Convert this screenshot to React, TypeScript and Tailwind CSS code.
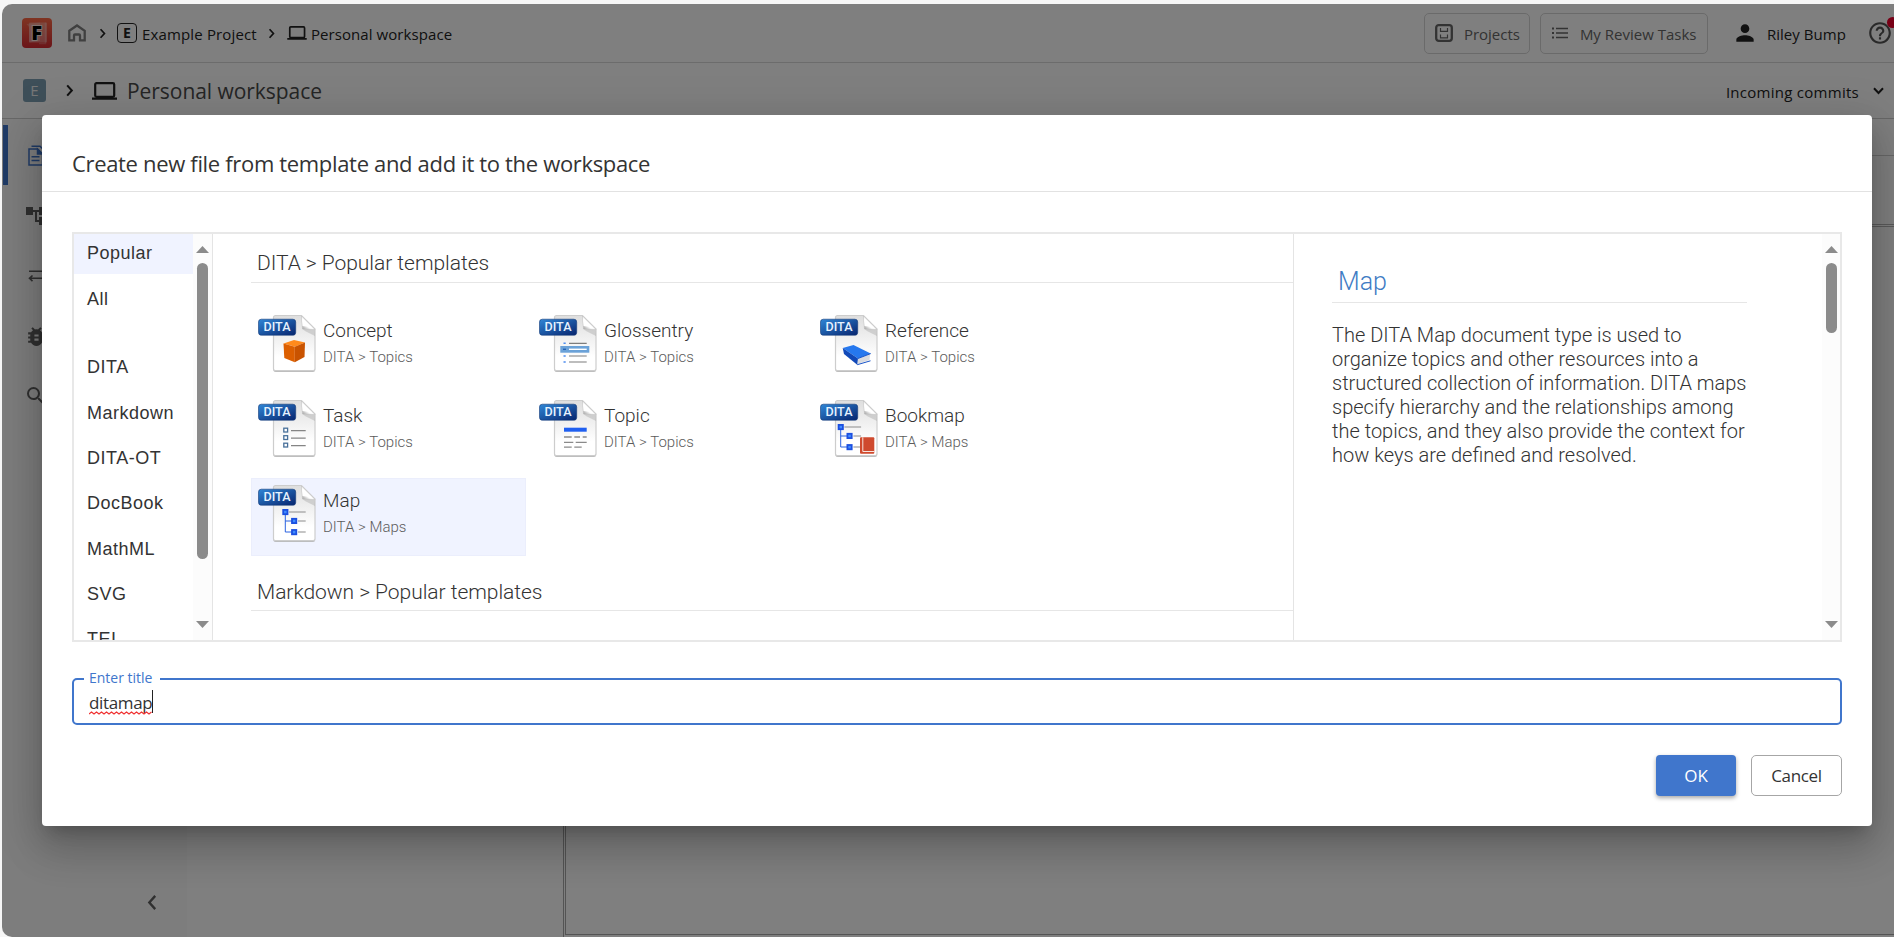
import type { ReactNode } from 'react';
import { MdAccountTree, MdBugReport, MdHelpOutline, MdPerson, MdSearch } from 'react-icons/md';

const UI = "font-['Open_Sans',sans-serif]";
const RB = "font-['Roboto',sans-serif] font-light";

function Chevron({ className, d = 'M2 1.5 7 7 2 12.5' }: { className: string; d?: string }) {
  return (
    <svg viewBox="0 0 9 14" className={className} fill="none" stroke="currentColor" strokeWidth="2.2">
      <path d={d} />
    </svg>
  );
}

function Laptop({ className }: { className: string }) {
  return (
    <svg viewBox="0 0 25 18" className={className} fill="none" stroke="currentColor">
      <rect x="3.2" y="1.2" width="19" height="13.6" rx="1.3" strokeWidth="2.2" />
      <path d="M0 16.6h25" strokeWidth="2.4" />
    </svg>
  );
}

function Logo() {
  return (
    <svg viewBox="0 0 30 30" className="size-[30px]">
      <defs>
        <linearGradient id="logo" x1="0" y1="0" x2="0" y2="1">
          <stop offset="0" stopColor="#ff6a46" />
          <stop offset="1" stopColor="#d62a32" />
        </linearGradient>
      </defs>
      <rect width="30" height="30" rx="4" fill="url(#logo)" />
      <path d="M4.5 6 18 4.5V23L7 24.5V9z" fill="#fff" opacity=".22" />
      <rect x="7" y="4.5" width="18" height="20" rx="1" fill="#fff" opacity=".3" />
      <path d="M17 25.500h6.500v-21" fill="none" stroke="#fff" strokeWidth="1.500" opacity=".2" />
      <text x="14.7" y="22" textAnchor="middle" fontFamily="Open Sans" fontWeight="800" fontSize="20" fill="#000" stroke="#ffe6e0" strokeWidth="2" paintOrder="stroke">F</text>
    </svg>
  );
}

function Tree({ dx = 0 }: { dx?: number }) {
  return (
    <g transform={`translate(${dx} 0)`}>
      <path d="M33 30h16.700M42 39h7.700M42 50h7.700" stroke="#8c8c8c" strokeWidth="1.200" />
      <path d="M29.300 32v18H36M29.300 39H36" stroke="#2a62e0" strokeWidth="1" fill="none" />
      <g fill="#3f8cff" stroke="#1b4fe0" strokeWidth="1.800">
        <rect x="27.200" y="27.900" width="4.300" height="4.300" />
        <rect x="36" y="36.800" width="4.300" height="4.300" />
        <rect x="36" y="48" width="4.300" height="4.300" />
      </g>
    </g>
  );
}

const glyphs: Record<string, ReactNode> = {
  Concept: (
    <g>
      <path d="M27.500 31.500 38 28l11 2.500-10 4.300z" fill="#ff8a1c" />
      <path d="M27.500 31.500 38.800 34.800V50.200L28.300 46z" fill="#dc5f00" />
      <path d="M38.800 34.800 49 30.500 48.500 45 38.800 50.200z" fill="#c95300" />
    </g>
  ),
  Glossentry: (
    <g>
      <path d="M32 31.300h17.700M32 44h17.700M32 50h17.700" stroke="#7d7d7d" strokeWidth="1.200" />
      <path d="M26.500 31.300h2.200M26.500 44h2.200M26.500 50h2.200" stroke="#4d8df0" strokeWidth="1.500" />
      <rect x="23.300" y="34" width="29" height="6.700" fill="#6ba2d8" />
      <path d="M26 37.300h3" stroke="#2462b8" strokeWidth="1.400" />
      <path d="M32 37.300h17.700" stroke="#fff" strokeWidth="1.400" />
    </g>
  ),
  Reference: (
    <g>
      <path d="M24.700 36 35.500 33 52.700 41.500 40 46.500z" fill="#2678ee" />
      <path d="M24.700 36 40 46.500 39.500 53 26 42z" fill="#1149b8" />
      <path d="M40 46.800 52 42.200 51.500 48 39.500 52z" fill="#d9dbe0" />
      <path d="M39.300 52.700 52.500 48.800M40 46.500 52.700 41.600" stroke="#1a55c8" strokeWidth="1" />
    </g>
  ),
  Task: (
    <g>
      <g fill="#fff" stroke="#48709a" strokeWidth="1.300">
        <rect x="27.800" y="31.200" width="3.800" height="3.800" />
        <rect x="27.800" y="38.700" width="3.800" height="3.800" />
        <rect x="27.800" y="46.200" width="3.800" height="3.800" />
      </g>
      <path d="M35 33.700h14.700M35 41.200h14.700M35 48.700h14.700" stroke="#858585" strokeWidth="1.200" />
    </g>
  ),
  Topic: (
    <g>
      <rect x="27" y="30.700" width="22.700" height="4" fill="#1f5ff0" />
      <path d="M27 40h7.700M37.300 40h5.700M45.700 40h4M27 45.300h9.300M38.700 45.300h11M27 50.200h7.700M37.300 50.200h7.400" stroke="#8a8a8a" strokeWidth="1.300" />
    </g>
  ),
  Bookmap: (
    <g>
      <Tree dx={-6.6} />
      <rect x="42" y="40.300" width="14.300" height="16.400" rx="1" fill="#cf4a2e" />
      <path d="M44.800 40.300v14.200H56.300" stroke="#f6e4df" strokeWidth="1" fill="none" />
    </g>
  ),
  Map: <Tree />,
};

function DitaIcon({ name }: { name: string }) {
  return (
    <svg viewBox="0 0 62 62" className="size-[62px] shrink-0">
      <defs>
        <linearGradient id="page" x1="0" y1="0" x2="0" y2="1">
          <stop offset="0" stopColor="#dedede" />
          <stop offset=".5" stopColor="#f4f4f4" />
          <stop offset=".75" stopColor="#ffffff" />
        </linearGradient>
        <linearGradient id="badge" x1="0" y1="0" x2="1" y2="1">
          <stop offset="0" stopColor="#2f86d6" />
          <stop offset="1" stopColor="#07246e" />
        </linearGradient>
        <linearGradient id="fold" x1="0" y1="1" x2=".7" y2=".3">
          <stop offset="0" stopColor="#8f8f8f" />
          <stop offset=".5" stopColor="#ffffff" />
        </linearGradient>
      </defs>
      <path d="M19.500 4.500h26L59 17.500V58a2 2 0 0 1-2 2H19.500a2 2 0 0 1-2-2V6.500a2 2 0 0 1 2-2z" fill="#a8a8a8" opacity=".8" />
      <path d="M19.500 3.500h26L59 17V56.700a2 2 0 0 1-2 2H19.500a2 2 0 0 1-2-2V5.500a2 2 0 0 1 2-2z" fill="url(#page)" stroke="#cdcdcd" strokeWidth="1.200" />
      <path d="M46 16.500 58.500 17.500 59 24 49 19z" fill="#9a9a9a" opacity=".35" />
      <path d="M45.500 4 59 17.500 46.500 17z" fill="url(#fold)" stroke="#bdbdbd" strokeWidth=".6" />
      <path d="M46 6.500 56 15.300 46.500 14z" fill="#fff" />
      {glyphs[name]}
      <rect x="2.500" y="7.200" width="37.200" height="16" rx="2.800" fill="url(#badge)" stroke="#143a78" strokeWidth=".6" />
      <text x="21" y="19.400" textAnchor="middle" fontFamily="Roboto" fontWeight="500" fontSize="12.500" fill="#e6f2ff" textLength="27" lengthAdjust="spacingAndGlyphs">DITA</text>
    </svg>
  );
}

function Scrollbar({ track, thumb }: { track: string; thumb: string }) {
  return (
    <div className={`flex shrink-0 flex-col items-center bg-[#fcfcfc] text-[#8b8b8b] ${track}`}>
      <svg viewBox="0 0 13 7" className="mt-[12px] h-[7px] w-[13px]" fill="currentColor"><path d="M6.500 0 13 7H0z" /></svg>
      <div className={`mt-[10px] rounded-full bg-[#8b8b8b] ${thumb}`} />
      <svg viewBox="0 0 13 7" className="mt-auto mb-[12px] h-[7px] w-[13px]" fill="currentColor"><path d="M0 0h13L6.500 7z" /></svg>
    </div>
  );
}

const categories = ['DITA', 'Markdown', 'DITA-OT', 'DocBook', 'MathML', 'SVG', 'TEI'];
const templates = [
  ['Concept', 'Topics'],
  ['Glossentry', 'Topics'],
  ['Reference', 'Topics'],
  ['Task', 'Topics'],
  ['Topic', 'Topics'],
  ['Bookmap', 'Maps'],
  ['Map', 'Maps'],
];

function TopBar() {
  return (
    <header className="flex h-[59px] shrink-0 items-center border-b border-[#d8d8d8] pl-[20px] text-[15px] leading-[24px] text-[#222]">
      <Logo />
      <svg viewBox="0 0 18 18" className="ml-4 h-[18px] w-[18px] text-[#808080]" fill="none" stroke="currentColor" strokeWidth="2.300">
        <path d="M1.300 6.800 9 1.500l7.700 5.300V16.300H12v-4.800a1 1 0 0 0-1-1H7a1 1 0 0 0-1 1v4.800H1.300z" />
      </svg>
      <Chevron className="ml-[13px] h-[11px] w-[7px]" />
      <span className="ml-[11px] flex size-5 items-center justify-center rounded-[4px] border border-[#222] text-[14px] font-bold">E</span>
      <span className="ml-[5px] pt-[2px] tracking-[0.15px]">Example Project</span>
      <Chevron className="ml-[11px] h-[11px] w-[7px]" />
      <Laptop className="ml-[12px] h-[14px] w-5" />
      <span className="ml-1 pt-[2px] tracking-[0.08px]">Personal workspace</span>

      <div className="ml-auto flex h-[41px] w-[106px] items-center rounded-[5px] border border-[#d4d4d4] pl-[10px] text-[#666]">
        <svg viewBox="0 0 18 18" className="size-[18px]" fill="none" stroke="currentColor">
          <rect x="1.200" y="1.200" width="15.600" height="15.600" rx="2.500" strokeWidth="2.300" />
          <path d="M5.500 4v3.300h7V4M5.500 10.500v3.300h7v-3.300" strokeWidth="1.200" />
        </svg>
        <span className="ml-[11px] pt-[2px]">Projects</span>
      </div>
      <div className="ml-[10px] flex h-[41px] w-[168px] items-center rounded-[5px] border border-[#d4d4d4] pl-[11px] text-[#666]">
        <svg viewBox="0 0 16 14" className="h-[14px] w-4" stroke="currentColor">
          <path d="M4 2.500h12M4 7h12M4 11.500h12" strokeWidth="1.700" />
          <path d="M0 2.500h2M0 7h2M0 11.500h2" strokeWidth="2" />
        </svg>
        <span className="ml-3 pt-[2px] whitespace-nowrap">My Review Tasks</span>
      </div>
      <MdPerson className="ml-[24px] size-[26px]" />
      <span className="ml-[9px] pt-[2px] tracking-[0.050px] whitespace-nowrap">Riley Bump</span>
      <div className="relative ml-[21px] size-[26px] shrink-0">
        <MdHelpOutline className="size-[26px] text-[#555]" />
        <span className="absolute -top-[3px] left-[20px] size-[11px] rounded-full bg-[#f0002c]" />
      </div>
      <span className="w-[1px] shrink-0" />
    </header>
  );
}

function App() {
  return (
    <div className={`h-[937px] w-[1894px] overflow-hidden bg-[#f6f6f6] pt-1 pl-[2px] ${UI}`}>
      <div className="relative flex h-[933px] flex-col overflow-hidden rounded-l-[10px] bg-white">
        <TopBar />
        <div className="flex h-[56px] shrink-0 items-center border-b border-[#cfcfcf] pl-[21px] text-[#222]">
          <span className="flex size-[23px] items-center justify-center rounded-[3px] bg-[#7d9fb3] text-[15px] text-[#eee]">E</span>
          <Chevron className="ml-[19px] h-[13px] w-[9px]" />
          <Laptop className="ml-[18px] h-[18px] w-[25px]" />
          <span className="ml-[10px] text-[21px] leading-[30px] tracking-[-0.050px] text-[#4a4a4a]">Personal workspace</span>
          <span className="ml-auto pt-[2px] text-[15px] leading-[24px] tracking-[0.27px]">Incoming commits</span>
          <svg viewBox="0 0 11 8" className="mr-[10px] ml-[14px] h-[8px] w-[11px]" fill="none" stroke="currentColor" strokeWidth="2"><path d="M1 1.200 5.500 6 10 1.200" /></svg>
        </div>

        <div className="flex min-h-0 flex-1">
          <nav className="flex w-[185px] shrink-0 flex-col bg-[#fafafa] pt-[6px] text-[#606060]">
            <div className="ml-[1px] flex h-[60px] items-center border-l-[5px] border-[#4076cc] pl-[20px] text-[#4076cc]">
              <svg viewBox="0 0 20 21" className="h-[21px] w-5" fill="none" stroke="currentColor" strokeWidth="1.500">
                <path d="M1 4h8.500l5 5v11H1zM3.500 1.200h8.500L17.500 6.500V18" />
                <path d="M9.500 4v5h5z" fill="currentColor" />
                <path d="M3.500 11.800h8M3.500 15.600h8" />
              </svg>
            </div>
            <div className="flex h-[60px] items-center pt-[2px] pl-[22px]"><MdAccountTree className="size-[24px]" /></div>
            <div className="flex h-[60px] items-center pl-[26px]">
              <svg viewBox="0 0 20 14" className="h-[14px] w-5" fill="none" stroke="currentColor" strokeWidth="1.600">
                <path d="M1 3.300h17M15 .5l3 2.800-3 2.800M20 10.300H2M4.500 7.500l-3 2.800 3 2.800" />
              </svg>
            </div>
            <div className="flex h-[60px] items-center pt-[2px] pl-[22px]"><MdBugReport className="size-[25px]" /></div>
            <div className="flex h-[60px] items-center pt-[2px] pl-[22px]"><MdSearch className="size-[24px]" /></div>
            <div className="mt-auto flex h-[70px] items-center justify-end pr-[30px]">
              <Chevron className="h-[15px] w-[10px]" d="M7.500 .800 2 7l5.500 6.200" />
            </div>
          </nav>
          <div className="w-[377px] shrink-0 border-r border-[#a8a8a8]" />
          <main className="mb-[2px] ml-[1px] flex min-w-0 flex-1 flex-col border-b border-l border-[#a8a8a8]">
            <div className="h-[37px] border-b border-[#cfcfcf]" />
            <div className="h-[71px] border-b-[3px] border-double border-[#b4b4b4]" />
          </main>
        </div>

        <div className="absolute inset-0 bg-black/50">
          <section className="mt-[111px] ml-[40px] flex h-[711px] w-[1830px] flex-col rounded-[4px] bg-white text-[#333] shadow-[0_11px_15px_-7px_rgba(0,0,0,0.2),0_24px_38px_3px_rgba(0,0,0,0.14),0_9px_46px_8px_rgba(0,0,0,0.12)]">
            <h2 className="h-[77px] shrink-0 border-b border-[#e2e2e2] pt-[32px] pl-[30px] text-[22px] leading-[32px] tracking-[-0.33px]">
              Create new file from template and add it to the workspace
            </h2>
            <div className="mx-[30px] mt-10 flex h-[410px] shrink-0 border-2 border-[#e8e8e8]">
              <div className="flex w-[119px] shrink-0 flex-col overflow-hidden font-['Liberation_Sans',sans-serif] text-[18px] tracking-[0.5px]">
                <div className="-mt-[5.300px] flex h-[45.300px] shrink-0 items-center bg-[#f0f3ff] pt-[5px] pl-[13px]">Popular</div>
                <div className="mb-[23.500px] flex h-[45.300px] shrink-0 items-center pt-[5px] pl-[13px]">All</div>
                {categories.map((c) => (
                  <div key={c} className="flex h-[45.300px] shrink-0 items-center pt-[5px] pl-[13px]">{c}</div>
                ))}
              </div>
              <Scrollbar track="w-[19px]" thumb="h-[296px] w-[11px]" />
              <div className={`w-[1081px] shrink-0 overflow-hidden border-l border-[#e4e4e4] pl-[38px] ${RB}`}>
                <h3 className="h-[49px] border-b border-[#e6e6e6] pt-[14px] pl-[6px] text-[21px] leading-[30px] tracking-[-0.040px]">DITA &gt; Popular templates</h3>
                <div className="mt-[25px] grid grid-cols-[275px_275px_275px] gap-x-[6px] gap-y-[7px]">
                  {templates.map(([name, kind]) => (
                    <div key={name} className={`flex h-[78px] pl-[5px] ${name === 'Map' ? 'bg-[#f0f3ff] ring-1 ring-[#ebeefc] ring-inset' : ''}`}>
                      <div className="pt-1"><DitaIcon name={name} /></div>
                      <div className="pt-[10px] pl-[5px]">
                        <div className="text-[19px] leading-[26px]">{name}</div>
                        <div className="text-[15px] leading-[26px] text-[#5c5c5c]">DITA &gt; {kind}</div>
                      </div>
                    </div>
                  ))}
                </div>
                <h3 className="mt-[6px] h-[49px] border-b border-[#e6e6e6] pt-[15px] pl-[6px] text-[21px] leading-[30px] tracking-[-0.040px]">Markdown &gt; Popular templates</h3>
              </div>
              <div className={`flex min-w-0 flex-1 justify-between border-l border-[#e4e4e4] pl-[38px] ${RB}`}>
                <div className="w-[415px]">
                  <h3 className="h-[69px] border-b border-[#e6e6e6] pt-[33px] pl-[6px] text-[25px] leading-[30px] text-[#3f7cc4]">Map</h3>
                  <p className="mt-[20px] w-[418px] text-[20px] leading-[24px]">
                    The DITA Map document type is used to organize topics and other resources into a structured collection of information. DITA maps specify hierarchy and the relationships among the topics, and they also provide the context for how keys are defined and resolved.
                  </p>
                </div>
                <Scrollbar track="w-[18px]" thumb="h-[70px] w-[11px]" />
              </div>
            </div>

            <div className="relative mx-[30px] mt-9 flex h-[47px] shrink-0 items-center rounded-[5px] border-2 border-[#4076cc] pl-[15px]">
              <span className="absolute -top-[12px] left-[10px] bg-white pr-[7px] pl-[5px] text-[14px] leading-[20px] text-[#4076cc]">Enter title</span>
              <span className="relative pt-[2px] text-[17px] leading-[24px] tracking-[-0.35px]">
                ditamap
                <svg viewBox="0 0 63 4" className="absolute bottom-0 left-0 h-1 w-[63px]" fill="none" stroke="#f03030" strokeWidth="1.200">
                  <path d="M0 3 2.500 1 5 3l2.500-2L10 3l2.500-2L15 3l2.500-2L20 3l2.500-2L25 3l2.500-2L30 3l2.500-2L35 3l2.500-2L40 3l2.500-2L45 3l2.500-2L50 3l2.500-2L55 3l2.500-2L60 3l2.500-2" />
                </svg>
              </span>
              <span className="h-[23px] w-px bg-[#222]" />
            </div>

            <div className="mt-[30px] mr-[30px] flex justify-end gap-[15px]">
              <button className="h-[41px] w-20 rounded-[4px] bg-[#4076cc] text-[17px] text-white shadow-[0_2px_4px_rgba(0,0,0,0.35)]">OK</button>
              <button className="h-[41px] w-[91px] rounded-[5px] border border-[#a6a6a6] bg-white text-[17px] tracking-[-0.35px]">Cancel</button>
            </div>
          </section>
        </div>
      </div>
    </div>
  );
}

export default App;
